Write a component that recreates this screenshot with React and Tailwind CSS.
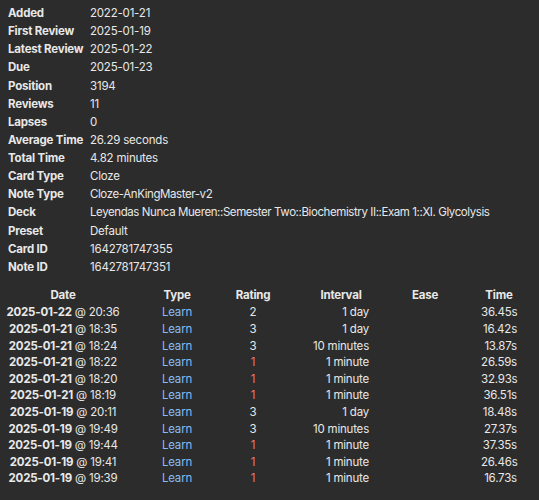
import React from 'react';

const stats = [
  ['Added', '2022-01-21'],
  ['First Review', '2025-01-19'],
  ['Latest Review', '2025-01-22'],
  ['Due', '2025-01-23'],
  ['Position', '3194'],
  ['Reviews', '11'],
  ['Lapses', '0'],
  ['Average Time', '26.29 seconds'],
  ['Total Time', '4.82 minutes'],
  ['Card Type', 'Cloze'],
  ['Note Type', 'Cloze-AnKingMaster-v2', true],
  ['Deck', 'Leyendas Nunca Mueren::Semester Two::Biochemistry II::Exam 1::XI. Glycolysis', true],
  ['Preset', 'Default'],
  ['Card ID', '1642781747355'],
  ['Note ID', '1642781747351'],
];

const reviews = [
  ['2025-01-22', '20:36', 2, '1 day', '36.45s'],
  ['2025-01-21', '18:35', 3, '1 day', '16.42s'],
  ['2025-01-21', '18:24', 3, '10 minutes', '13.87s'],
  ['2025-01-21', '18:22', 1, '1 minute', '26.59s'],
  ['2025-01-21', '18:20', 1, '1 minute', '32.93s'],
  ['2025-01-21', '18:19', 1, '1 minute', '36.51s'],
  ['2025-01-19', '20:11', 3, '1 day', '18.48s'],
  ['2025-01-19', '19:49', 3, '10 minutes', '27.37s'],
  ['2025-01-19', '19:44', 1, '1 minute', '37.35s'],
  ['2025-01-19', '19:41', 1, '1 minute', '26.46s'],
  ['2025-01-19', '19:39', 1, '1 minute', '16.73s'],
];

const rowClass = 'grid grid-cols-[126px_102px_50px_91px_112px_36px] h-[16.6px] leading-[16.6px]';

export default function App() {
  return (
    <div className="w-[539px] h-[500px] overflow-hidden bg-[#2c2c2c] text-[#e8e8e8] text-[11.5px] tracking-[-0.2px] font-['Inter',sans-serif] pt-1">
      <div className="pl-2">
        {stats.map(([label, value, tight]) => (
          <div key={label} className="grid grid-cols-[82px_1fr] h-[18.14px] leading-[18.14px]">
            <span className="font-bold">{label}</span>
            <span className={tight ? 'whitespace-nowrap tracking-[-0.41px]' : 'whitespace-nowrap'}>{value}</span>
          </div>
        ))}
      </div>

      <div className="mt-[11.5px]">
        <div className={`${rowClass} font-bold text-center`}>
          <span>Date</span>
          <span>Type</span>
          <span>Rating</span>
          <span className="pl-[35px]">Interval</span>
          <span>Ease</span>
          <span className="whitespace-nowrap">Time</span>
        </div>
        <div className="pt-[0.5px]">
          {reviews.map(([date, time, rating, interval, taken]) => (
            <div key={date + time} className={rowClass}>
              <span className="text-center whitespace-nowrap">
                <b>{date}</b> @ {time}
              </span>
              <span className="text-center text-[#85bcf5]">Learn</span>
              <span className={rating === 1 ? 'text-center text-[#e07a78]' : 'text-center'}>{rating}</span>
              <span className="text-right">{interval}</span>
              <span />
              <span className="text-right">{taken}</span>
            </div>
          ))}
        </div>
      </div>
    </div>
  );
}
